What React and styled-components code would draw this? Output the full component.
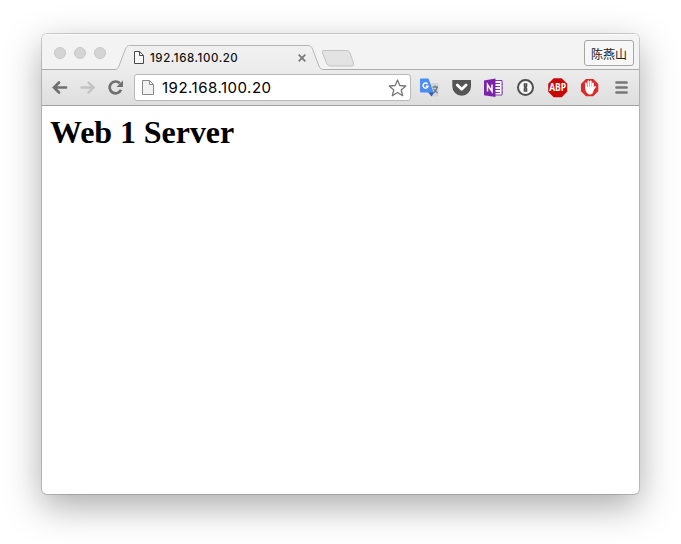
import React from "react";
import styled, { createGlobalStyle } from "styled-components";

const GlobalStyle = createGlobalStyle`
  html, body { margin: 0; background: #fff; overflow: hidden; }
  *, *::before, *::after { box-sizing: border-box; }
`;

const Desktop = styled.main`
  width: 681px;
  height: 544px;
  padding: 34px 42px 50px;
  background: #fff;
`;

const BrowserWindow = styled.section`
  width: 597px;
  height: 460px;
  display: flex;
  flex-direction: column;
  overflow: hidden;
  border-radius: 5px;
  background: #fff;
  box-shadow: 0 0 0 1px rgba(0, 0, 0, 0.16), 0 12px 36px rgba(0, 0, 0, 0.34);
`;

const TabStrip = styled.header`
  height: 36px;
  flex: none;
  display: flex;
  align-items: flex-end;
  background: #f3f3f3;
  box-shadow: inset 0 -1px #acacac, inset 0 1px #fafafa;
`;

const Lights = styled.div`
  display: flex;
  gap: 8px;
  width: 73px;
  padding-left: 12px;
  align-self: flex-start;
  padding-top: 13px;
`;

const Light = styled.i`
  width: 12px;
  height: 12px;
  border-radius: 50%;
  border: 1px solid #c9c9c9;
  background: #d5d5d5;
`;

const Tab = styled.div`
  position: relative;
  width: 209px;
  height: 26px;
  display: flex;
  align-items: center;
  padding: 1px 18px 0 19px;
`;

const TabShape = styled.svg`
  position: absolute;
  left: 0;
  top: 0;
`;

const TabTitle = styled.span`
  position: relative;
  flex: 1;
  margin-left: 6px;
  font: 500 11.5px/16px Inter, sans-serif;
  letter-spacing: 0.57px;
  color: #111;
`;

const Icon = styled.svg`
  position: relative;
  display: block;
  flex: none;
  overflow: visible;
`;

const NewTab = styled.svg`
  display: block;
  margin: 0 0 3px -3px;
`;

const UserButton = styled.button`
  width: 50px;
  height: 26px;
  margin: 0 5px 4px auto;
  padding: 1px 0 0;
  border: 1px solid #a6a6a6;
  border-radius: 3px;
  background: #f7f7f7;
  color: #222;
  font: 12px/23px "Noto Sans CJK SC", sans-serif;
`;

const Toolbar = styled.nav`
  height: 36px;
  flex: none;
  display: flex;
  align-items: center;
  padding: 0 7px 0 9px;
  border-bottom: 1px solid #a2a2a2;
  background: linear-gradient(#ececec, #dedede);
`;

const NavButtons = styled.div`
  display: flex;
  gap: 10px;
  width: 83px;
`;

const AddressBar = styled.div`
  width: 277px;
  height: 27px;
  display: flex;
  align-items: center;
  padding: 0 3px 0 7px;
  border: 1px solid #b9b9b9;
  border-radius: 3px;
  background: #fff;
`;

const Address = styled.span`
  flex: 1;
  margin-left: 8px;
  font: 400 15px/20px Inter, sans-serif;
  letter-spacing: 0.5px;
  color: #000;
`;

const Extensions = styled.div`
  display: flex;
  gap: 12px;
  margin-left: 9px;
`;

const Page = styled.article`
  flex: 1;
  padding: 8px;
`;

const Heading = styled.h1`
  margin: 0;
  font: bold 32px/37px "Liberation Serif", serif;
  letter-spacing: -0.06px;
  color: #000;
`;

function DocumentIcon({ w, h, color, fill }) {
  return (
    <Icon width={w} height={h} viewBox={`0 0 ${w} ${h}`}>
      <path d={`M.5.5H${w - 4.5}L${w - 0.5} 4.5V${h - 0.5}H.5ZM${w - 4.5}.5V4.5H${w - 0.5}`} fill={fill} stroke={color} />
    </Icon>
  );
}

function ExtensionIcon({ children }) {
  return <Icon width="20" height="20" viewBox="0 0 20 20">{children}</Icon>;
}

const octagon = "M6 .5H14L19.5 6V14L14 19.5H6L.5 14V6Z";

export default function App() {
  return (
    <Desktop>
      <GlobalStyle />
      <BrowserWindow>
        <TabStrip>
          <Lights><Light /><Light /><Light /></Lights>
          <Tab>
            <TabShape width="209" height="26" viewBox="0 0 209 26">
              <defs>
                <linearGradient id="tabFill" x1="0" y1="0" x2="0" y2="1">
                  <stop offset="0" stopColor="#f1f1f1" />
                  <stop offset="1" stopColor="#ececec" />
                </linearGradient>
              </defs>
              <path d="M0 25.5C2 25.5 3 24 4 22L10 6C11.500 2.500 12.500 1.500 14.500 1.500H193C195 1.500 196.500 2.500 197.500 5L204 22C205 24.500 206 25.500 209 25.500V26H0Z" fill="url(#tabFill)" />
              <path d="M0 25.5C2 25.5 3 24 4 22L10 6C11.500 2.500 12.500 1.500 14.500 1.500H193C195 1.500 196.500 2.500 197.500 5L204 22C205 24.500 206 25.500 209 25.500" fill="none" stroke="#b5b5b5" />
            </TabShape>
            <DocumentIcon w={10} h={13} color="#4a4a4a" fill="#f8f8f8" />
            <TabTitle>192.168.100.20</TabTitle>
            <Icon width="8" height="8" viewBox="0 0 8 8"><path d="M.7.7L7.300 7.300M7.300.7L.7 7.300" stroke="#777" strokeWidth="1.7" /></Icon>
          </Tab>
          <NewTab width="34" height="17" viewBox="0 0 34 17">
            <path d="M3 .5H26Q28 .5 29 3L32.5 13Q33.500 16 31 16H9Q7 16 6 14L1.500 3Q.5.5 3 .5Z" fill="#e3e3e3" stroke="#c3c3c3" />
          </NewTab>
          <UserButton>陈燕山</UserButton>
        </TabStrip>
        <Toolbar>
          <NavButtons>
            <Icon width="18" height="18" viewBox="0 0 18 18"><path d="M15 8.500H3M8 3.500L3 8.500L8 13.500" fill="none" stroke="#707070" strokeWidth="2.700" strokeLinecap="round" /></Icon>
            <Icon width="18" height="18" viewBox="0 0 18 18"><path d="M2.500 8.500H14.500M9.500 3.500L14.500 8.500L9.500 13.500" fill="none" stroke="#c3c3c3" strokeWidth="2.400" strokeLinecap="round" /></Icon>
            <Icon width="18" height="18" viewBox="0 0 18 18"><path d="M12.800 4.300A5.900 5.900 0 1 0 14 10.700" fill="none" stroke="#707070" strokeWidth="2.700" /><path d="M16 1.500V8H9.500Z" fill="#707070" /></Icon>
          </NavButtons>
          <AddressBar>
            <DocumentIcon w={12} h={15} color="#888" fill="#f2f2f2" />
            <Address>192.168.100.20</Address>
            <Icon width="18" height="18" viewBox="0 0 18 18"><path d="M8.500 1L10.800 6.500L16.800 7L12.200 11L13.700 16.700L8.500 13.500L3.300 16.700L4.800 11L.2 7L6.200 6.500Z" fill="#fff" stroke="#777" strokeWidth="1.300" strokeLinejoin="round" /></Icon>
          </AddressBar>
          <Extensions>
            <ExtensionIcon>
              <path d="M8 5H18.500V18.500H12Z" fill="#d4d4d4" />
              <path d="M8 14H14.500L11.500 18.500Z" fill="#3157b7" />
              <path d="M1 .5H8.500L13.500 14.500H1Q0 14.500 0 13.500V1.500Q0 .5 1 .5Z" fill="#4c8cf5" />
              <path d="M7.500 6A2.500 2.500 0 1 0 8 8.300H5.800" fill="none" stroke="#fff" strokeWidth="1.500" />
              <path d="M12.500 9H18M15 7.500V9M17 9.500Q16 13.500 13 15M13.500 11L17.500 15" fill="none" stroke="#67808b" strokeWidth="1.300" />
            </ExtensionIcon>
            <ExtensionIcon>
              <path d="M.3 2H19V8.500A9.350 9.350 0 0 1 .3 8.500Z" fill="#555" />
              <path d="M5.300 7L9.700 11.300L14.100 7" fill="none" stroke="#fff" strokeWidth="2.800" strokeLinecap="round" strokeLinejoin="round" />
            </ExtensionIcon>
            <ExtensionIcon>
              <path d="M10 2.500H18V17H10" fill="#fff" stroke="#8036ae" />
              <path d="M11 5.500H16M11 8.500H16M11 11.500H16M11 14.500H16M18 6H19M18 10H19M18 14H19" stroke="#8036ae" />
              <path d="M0 2.500L11.500.5V19L0 17.300Z" fill="#7b23a7" />
              <path d="M3.500 13.500V6.500L8 13.500V6.500" fill="none" stroke="#fff" strokeWidth="1.500" />
            </ExtensionIcon>
            <ExtensionIcon>
              <circle cx="9.500" cy="9.500" r="7.500" fill="#f7f7f7" stroke="#505050" strokeWidth="2" />
              <path d="M7.700 5.300H11.300V8.500L10.700 9.500L11.300 10.500V13.700H7.700V10.500L8.300 9.500L7.700 8.500Z" fill="#4c4c4c" />
              <path d="M9.500 6.500V8.500M9.500 10.500V12.500" stroke="#999" strokeWidth=".7" />
            </ExtensionIcon>
            <ExtensionIcon>
              <path d={octagon} fill="#c90606" transform="translate(-.3 -.2)" />
              <text x="9.700" y="13.200" textAnchor="middle" fill="#fff" fontFamily="Open Sans, sans-serif" fontSize="10" fontWeight="700" textLength="17" lengthAdjust="spacingAndGlyphs">ABP</text>
            </ExtensionIcon>
            <ExtensionIcon>
              <path d={octagon} fill="#df2929" transform="translate(.5 .5) scale(.91)" />
              <path d="M6.400 11L5.800 5.500M8.400 10V3.500M10.700 10V3.500M12.700 11L13 5.500M12.500 12L15 9" stroke="#fff" strokeWidth="1.900" strokeLinecap="round" />
              <path d="M5.400 9H13.700V12Q13 16.500 10 16.500Q7 16.500 5.400 12Z" fill="#fff" />
            </ExtensionIcon>
            <ExtensionIcon>
              <path d="M4.500 4.500H14.500M4.500 9.500H14.500M4.500 14.500H14.500" stroke="#777" strokeWidth="2.700" strokeLinecap="round" />
            </ExtensionIcon>
          </Extensions>
        </Toolbar>
        <Page><Heading>Web 1 Server</Heading></Page>
      </BrowserWindow>
    </Desktop>
  );
}
